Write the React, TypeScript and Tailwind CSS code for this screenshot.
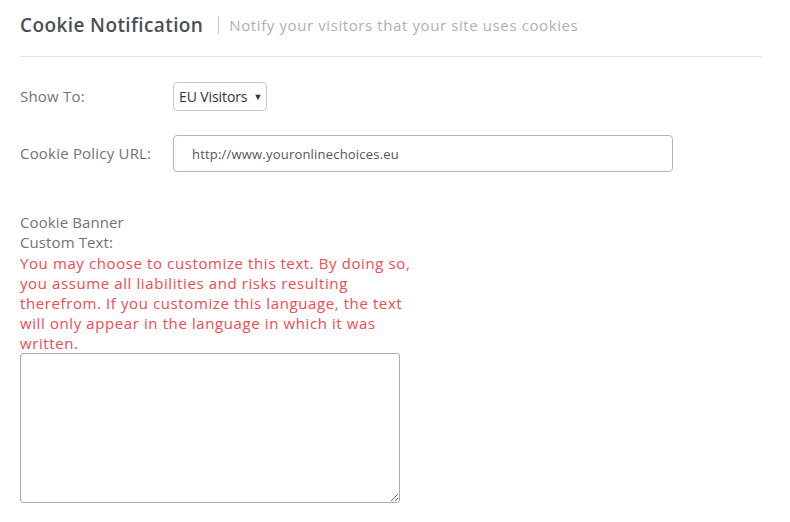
import React from 'react';

const CookieSettings = () => {
    return (
        <div className="bg-white min-h-[522px] pl-5 pr-7 text-[#737373]" style={{ fontFamily: '"Open Sans", Lato, sans-serif' }}>
            <div className="flex items-center h-[57px] border-b border-[#e3e3e3] pb-[6px]">
                <h1 className="text-[19px] font-semibold text-[#4a5056] tracking-[0.4px] leading-[26px]">Cookie Notification</h1>
                <span className="ml-[15px] mr-[10px] h-[18px] w-px bg-[#c8c8c8]" />
                <span className="text-[15px] text-[#b0b0b0] tracking-[0.6px]">Notify your visitors that your site uses cookies</span>
            </div>

            <div className="flex items-center mt-[25px]">
                <label className="w-[153px] text-[15px] tracking-[0.2px]">Show To:</label>
                <div className="flex items-center h-[29px] w-[94px] border border-[#c9c9c9] rounded-[4px] pl-[5px] text-[14px] text-[#333] tracking-[-0.1px]">
                    <span>EU Visitors</span>
                    <span className="ml-[6px] text-[9px]">▼</span>
                </div>
            </div>

            <div className="flex items-start mt-[24px]">
                <label className="w-[153px] pt-[7px] text-[15px] tracking-[0.2px]">Cookie Policy URL:</label>
                <input
                    type="text"
                    defaultValue="http://www.youronlinechoices.eu"
                    className="h-[37px] w-[500px] border border-[#b5b5b5] rounded-[4px] pl-[18px] text-[13px] text-[#555] tracking-[0.2px] outline-none"
                />
            </div>

            <div className="mt-[40px] text-[15px] leading-[20px] tracking-[0.1px]">
                <div>Cookie Banner</div>
                <div>Custom Text:</div>
                <p className="text-[#f24a52] text-[15px] leading-[20px] tracking-[0.6px] pt-[1px]">
                    You may choose to customize this text. By doing so,<br />
                    you assume all liabilities and risks resulting<br />
                    therefrom. If you customize this language, the text<br />
                    will only appear in the language in which it was<br />
                    written.
                </p>
            </div>

            <textarea className="block w-[380px] h-[150px] border border-[#aaa] rounded-[3px] outline-none" />
        </div>
    );
};

export default function App() {
    return <CookieSettings />;
}
